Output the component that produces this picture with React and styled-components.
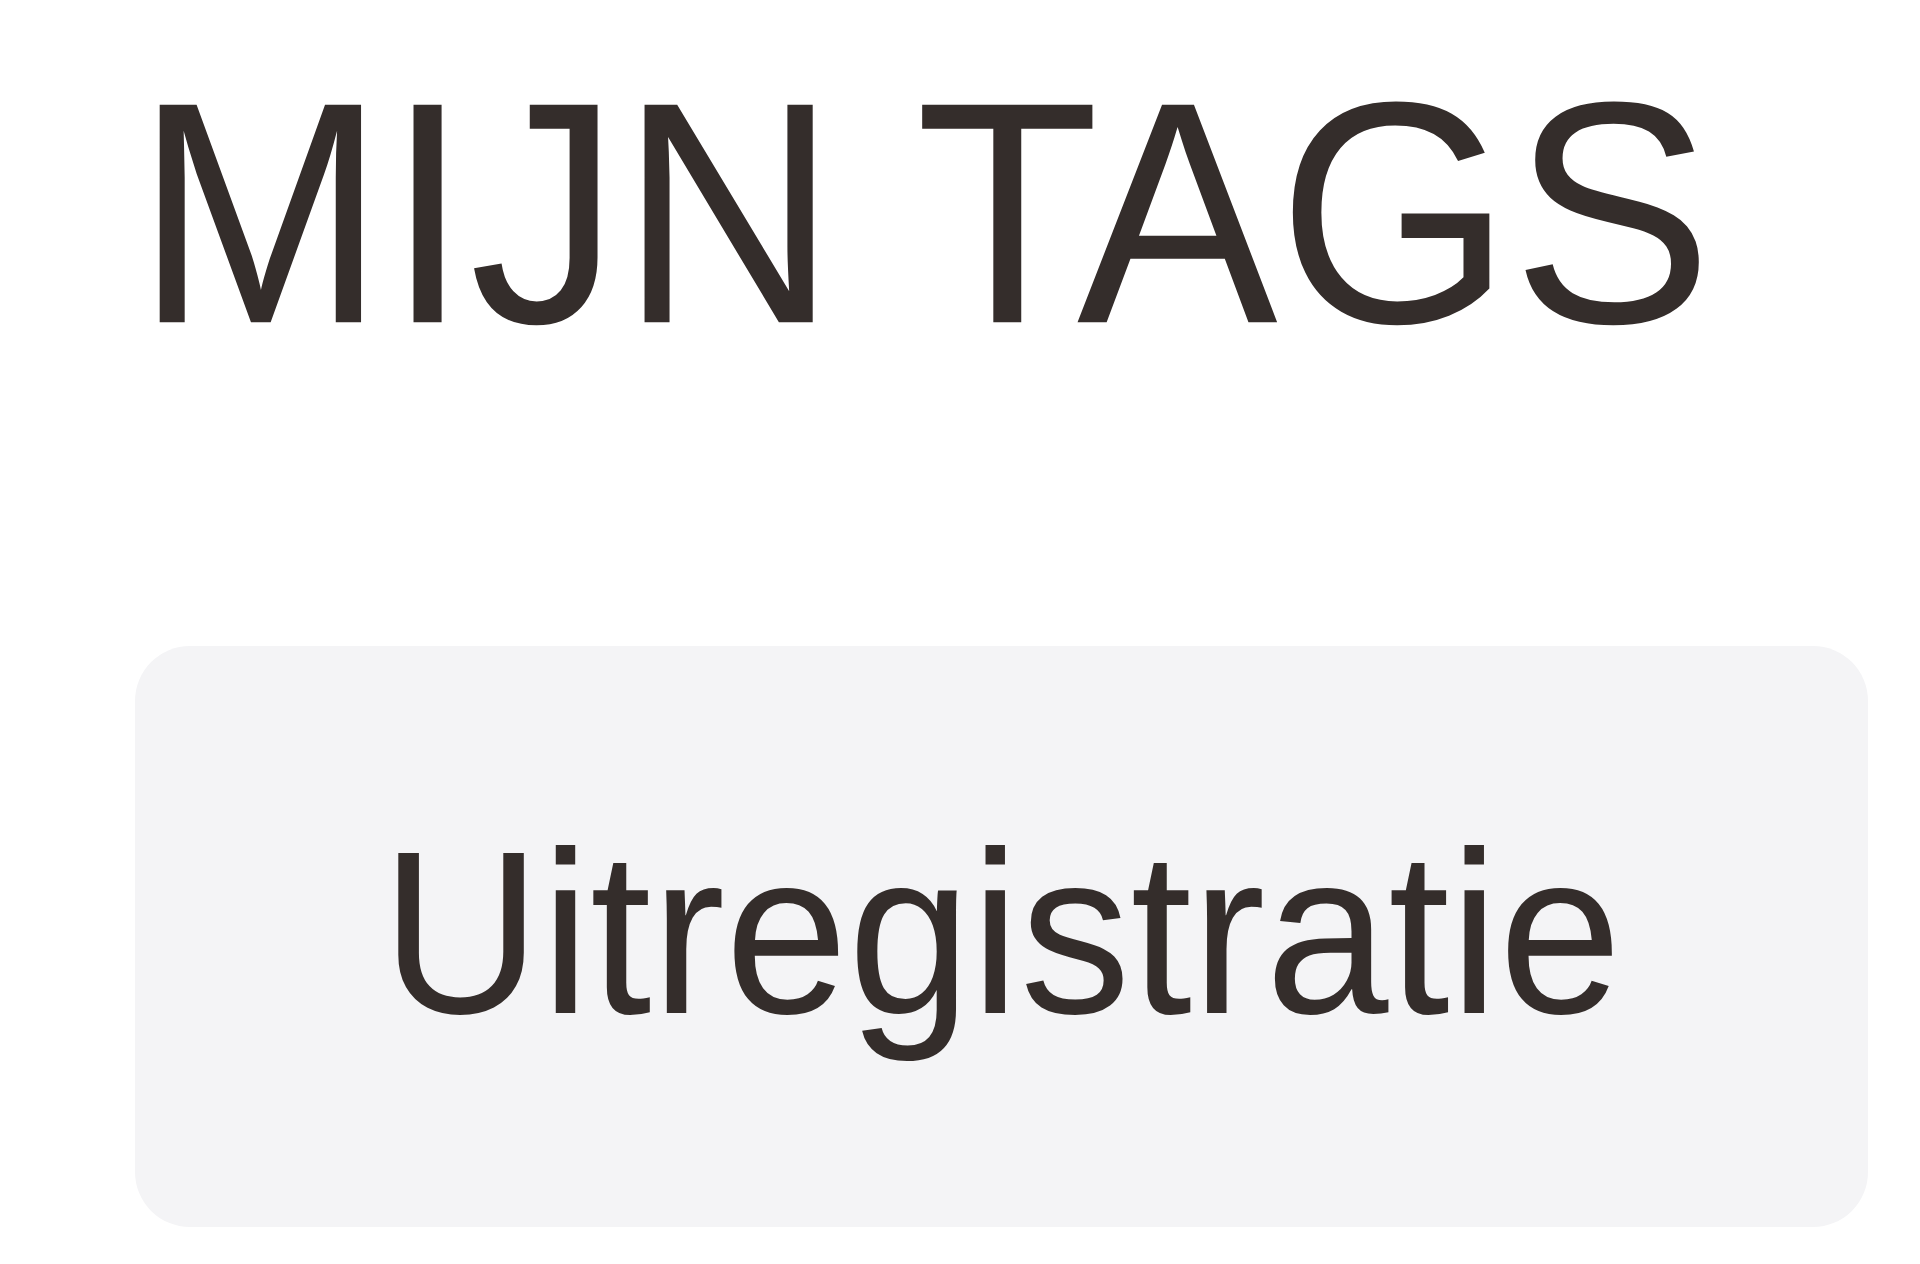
import React from "react";
import styled, { createGlobalStyle } from "styled-components";

const Global = createGlobalStyle`
  html, body { margin: 0; padding: 0; background: #ffffff; }
  body { font-family: "Liberation Sans", Arial, sans-serif; color: #342d2b; }
`;

const Page = styled.main`
  display: flex;
  flex-direction: column;
  align-items: flex-start;
  gap: 255px;
  padding: 45px 0 0 135px;
`;

const Title = styled.h1`
  margin: 0;
  font-size: 301px;
  font-weight: 400;
  line-height: normal;
  color: #342d2b;
`;

/* Arial's capitals stand a little taller than Liberation Sans' do */
const ArialCaps = styled.span`
  display: inline-block;
  transform: scaleY(1.05);
  transform-origin: 50% 78.8%;
`;

const TagList = styled.div`
  display: flex;
  flex-direction: column;
  gap: 24px;
`;

const Tag = styled.div`
  width: 1733px;
  height: 581px;
  border-radius: 55px;
  background: #f4f4f6;
  display: flex;
  align-items: center;
  justify-content: center;
  font-size: 221px;
  line-height: normal;
  color: #342d2b;
`;

export default function App() {
  return (
    <>
      <Global />
      <Page>
        <Title>
          <ArialCaps>MIJN TAGS</ArialCaps>
        </Title>
        <TagList>
          <Tag>
            <ArialCaps>Uitregistratie</ArialCaps>
          </Tag>
        </TagList>
      </Page>
    </>
  );
}
